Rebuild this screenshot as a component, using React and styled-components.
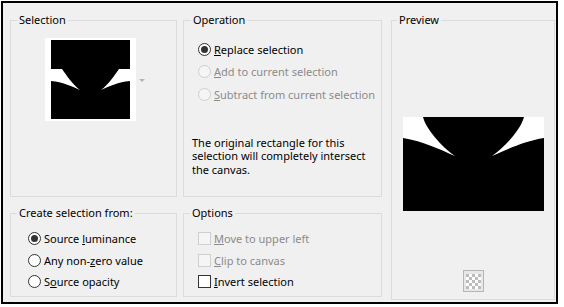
import React from 'react'
import styled, { createGlobalStyle } from 'styled-components'

const Global = createGlobalStyle`
  html, body { margin: 0; padding: 0; background: #fff; }
  body { font-family: "Noto Sans", "Open Sans", sans-serif; font-size: 11px; color: #000; }
`

const Frame = styled.div`
  box-sizing: border-box;
  width: 557px;
  height: 303px;
  margin: 1px 0 0 1px;
  border: 2px solid #000;
  background: #f0f0f0;
  padding: 17px 1px 0 7px;
  display: flex;
  gap: 9px;
`

const Grid = styled.div`
  display: grid;
  grid-template-columns: 167px 199px;
  grid-template-rows: 177px 84px;
  column-gap: 6px;
  row-gap: 16px;
  align-self: flex-start;
`

const Group = styled.div`
  box-sizing: border-box;
  border: 1px solid #dcdcdc;
  display: flex;
  flex-direction: column;
  ${p => p.$tall && 'width: 164px; height: 280px;'}
`

const Legend = styled.div`
  align-self: flex-start;
  margin: -9px 0 0 ${p => p.$left || 6}px;
  padding: 0 2px;
  line-height: 16px;
  background: #f0f0f0;
`

const ThumbRow = styled.div`
  display: flex;
  align-items: center;
  gap: 3px;
  margin: 10px 0 0 34px;
`

const Thumb = styled.div`
  width: 79px;
  height: 79px;
  padding: 2px 6px;
  background: #fff;
  svg { display: block; }
`

const DropArrow = styled.div`
  width: 0;
  height: 0;
  border-left: 3px solid transparent;
  border-right: 3px solid transparent;
  border-top: 3px solid #b4b4b4;
  margin-top: 2px;
`

const List = styled.div`
  display: flex;
  flex-direction: column;
  margin: ${p => p.$mt || 0}px 0 0 ${p => p.$ml || 0}px;
`

const Row = styled.label`
  display: flex;
  align-items: center;
  gap: 3px;
  height: ${p => p.$h || 22}px;
  color: ${p => (p.$disabled ? '#8b8b8b' : '#000')};
  white-space: nowrap;
`

const Radio = styled.span`
  box-sizing: border-box;
  width: 13px;
  height: 13px;
  border-radius: 50%;
  border: 1px solid ${p => (p.$disabled ? '#cfcfcf' : '#333')};
  background: ${p => (p.$disabled ? '#f5f5f5' : '#fff')};
  display: flex;
  align-items: center;
  justify-content: center;
  flex: none;
  &::after {
    content: '';
    width: 7px;
    height: 7px;
    border-radius: 50%;
    background: ${p => (p.$checked ? '#333' : 'transparent')};
  }
`

const Check = styled.span`
  box-sizing: border-box;
  width: 13px;
  height: 13px;
  border: 1px solid ${p => (p.$disabled ? '#cfcfcf' : '#333')};
  background: ${p => (p.$disabled ? '#f5f5f5' : '#fff')};
  flex: none;
`

const Note = styled.p`
  margin: 30px 0 0 8px;
  line-height: 13.5px;
  width: 175px;
`

const PreviewBox = styled.div`
  margin: 89px auto 0;
  width: 141px;
  height: 94px;
  svg { display: block; }
`

const AlphaButton = styled.div`
  box-sizing: border-box;
  margin: auto auto 7px;
  width: 21px;
  height: 22px;
  border: 1px solid #b5b5b5;
  background: #e8e8e8;
  display: flex;
  align-items: center;
  justify-content: center;
  svg { display: block; }
`

function Checker() {
  const cells = []
  for (let r = 0; r < 5; r++)
    for (let c = 0; c < 5; c++)
      if ((r + c) % 2 === 0) cells.push(<rect key={r + '-' + c} x={c * 3} y={r * 3} width="3" height="3" fill="#bcbcbc" />)
  return (
    <svg width="15" height="15" viewBox="0 0 15 15">
      <rect width="15" height="15" fill="#fff" />
      {cells}
    </svg>
  )
}

const radiosOp = [
  { label: <><u>R</u>eplace selection</>, checked: true },
  { label: <><u>A</u>dd to current selection</>, disabled: true },
  { label: <><u>S</u>ubtract from current selection</>, disabled: true },
]

const radiosFrom = [
  { label: <>Source <u>l</u>uminance</>, checked: true },
  { label: <>Any non-<u>z</u>ero value</> },
  { label: <>S<u>o</u>urce opacity</> },
]

const options = [
  { label: <><u>M</u>ove to upper left</>, disabled: true },
  { label: <><u>C</u>lip to canvas</>, disabled: true },
  { label: <><u>I</u>nvert selection</> },
]

export default function App() {
  return (
    <>
      <Global />
      <Frame>
        <Grid>
          <Group>
            <Legend>Selection</Legend>
            <ThumbRow>
              <Thumb>
                <svg width="79" height="79" viewBox="0 0 79 79">
                  <rect width="79" height="79" fill="#000" />
                  <path d="M0,29 H11 C16,36 22,45 29,50 C20,46 12,42 0,41 Z" fill="#fff" />
                  <path d="M79,29 H68 C63,36 57,45 50,50 C59,46 67,42 79,41 Z" fill="#fff" />
                </svg>
              </Thumb>
              <DropArrow />
            </ThumbRow>
          </Group>

          <Group>
            <Legend $left={7}>Operation</Legend>
            <List $mt={10} $ml={14}>
              {radiosOp.map((r, i) => (
                <Row key={i} $h={22.5} $disabled={r.disabled}>
                  <Radio $checked={r.checked} $disabled={r.disabled} />
                  <span>{r.label}</span>
                </Row>
              ))}
            </List>
            <Note>
              The original rectangle for this selection will completely intersect the canvas.
            </Note>
          </Group>

          <Group>
            <Legend>Create selection from:</Legend>
            <List $mt={7} $ml={17}>
              {radiosFrom.map((r, i) => (
                <Row key={i} $h={21.5}>
                  <Radio $checked={r.checked} />
                  <span>{r.label}</span>
                </Row>
              ))}
            </List>
          </Group>

          <Group>
            <Legend>Options</Legend>
            <List $mt={7} $ml={14}>
              {options.map((r, i) => (
                <Row key={i} $h={21.5} $disabled={r.disabled}>
                  <Check $disabled={r.disabled} />
                  <span>{r.label}</span>
                </Row>
              ))}
            </List>
          </Group>
        </Grid>

        <Group $tall>
          <Legend $left={5}>Preview</Legend>
          <PreviewBox>
            <svg width="141" height="94" viewBox="0 0 141 94">
              <rect width="141" height="94" fill="#000" />
              <path d="M0,0 H20 C23,12 38,29 52,39 C38,33 20,24 0,21 Z" fill="#fff" />
              <path d="M141,0 H121 C118,12 103,29 89,39 C103,33 121,24 141,21 Z" fill="#fff" />
            </svg>
          </PreviewBox>
          <AlphaButton>
            <Checker />
          </AlphaButton>
        </Group>
      </Frame>
    </>
  )
}
